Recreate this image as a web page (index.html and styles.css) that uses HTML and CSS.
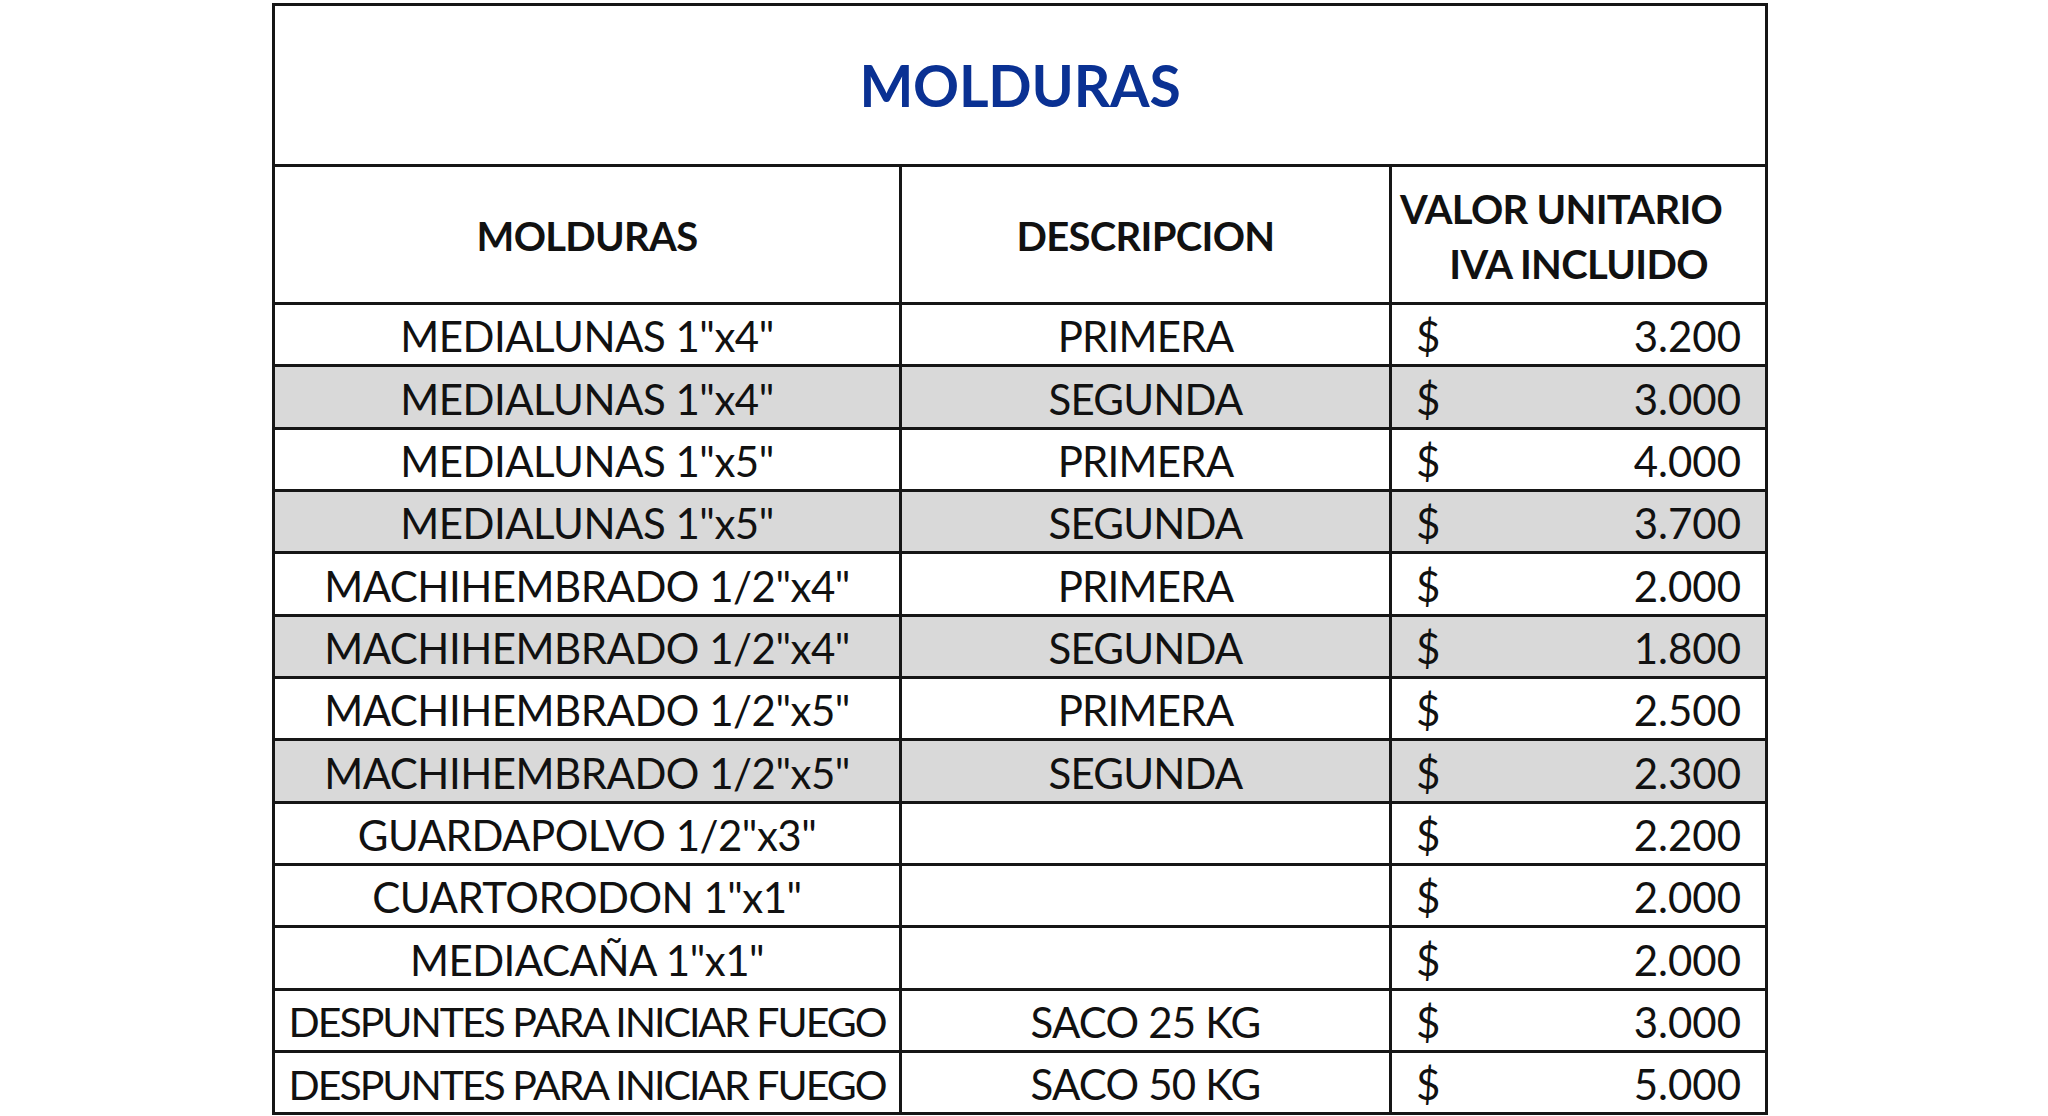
FILE: index.html
```html
<!DOCTYPE html>
<html lang="es">
<head>
<meta charset="utf-8">
<title>Molduras</title>
<link rel="stylesheet" href="styles.css">
</head>
<body>
<div class="sheet">
  <div class="cell title">MOLDURAS</div>
  <div class="cell head">MOLDURAS</div>
  <div class="cell head">DESCRIPCION</div>
  <div class="cell head head-two">
    <div class="line-one">VALOR UNITARIO</div>
    <div class="line-two">IVA INCLUIDO</div>
  </div>

  <div class="cell name">MEDIALUNAS 1"x4"</div>
  <div class="cell desc">PRIMERA</div>
  <div class="cell price"><span>$</span><span>3.200</span></div>

  <div class="cell name alt">MEDIALUNAS 1"x4"</div>
  <div class="cell desc alt">SEGUNDA</div>
  <div class="cell price alt"><span>$</span><span>3.000</span></div>

  <div class="cell name">MEDIALUNAS 1"x5"</div>
  <div class="cell desc">PRIMERA</div>
  <div class="cell price"><span>$</span><span>4.000</span></div>

  <div class="cell name alt">MEDIALUNAS 1"x5"</div>
  <div class="cell desc alt">SEGUNDA</div>
  <div class="cell price alt"><span>$</span><span>3.700</span></div>

  <div class="cell name">MACHIHEMBRADO 1/2"x4"</div>
  <div class="cell desc">PRIMERA</div>
  <div class="cell price"><span>$</span><span>2.000</span></div>

  <div class="cell name alt">MACHIHEMBRADO 1/2"x4"</div>
  <div class="cell desc alt">SEGUNDA</div>
  <div class="cell price alt"><span>$</span><span>1.800</span></div>

  <div class="cell name">MACHIHEMBRADO 1/2"x5"</div>
  <div class="cell desc">PRIMERA</div>
  <div class="cell price"><span>$</span><span>2.500</span></div>

  <div class="cell name alt">MACHIHEMBRADO 1/2"x5"</div>
  <div class="cell desc alt">SEGUNDA</div>
  <div class="cell price alt"><span>$</span><span>2.300</span></div>

  <div class="cell name">GUARDAPOLVO 1/2"x3"</div>
  <div class="cell desc"></div>
  <div class="cell price"><span>$</span><span>2.200</span></div>

  <div class="cell name">CUARTORODON 1"x1"</div>
  <div class="cell desc"></div>
  <div class="cell price"><span>$</span><span>2.000</span></div>

  <div class="cell name">MEDIACAÑA 1"x1"</div>
  <div class="cell desc"></div>
  <div class="cell price"><span>$</span><span>2.000</span></div>

  <div class="cell name tight">DESPUNTES PARA INICIAR FUEGO</div>
  <div class="cell desc">SACO 25 KG</div>
  <div class="cell price"><span>$</span><span>3.000</span></div>

  <div class="cell name tight">DESPUNTES PARA INICIAR FUEGO</div>
  <div class="cell desc">SACO 50 KG</div>
  <div class="cell price"><span>$</span><span>5.000</span></div>
</div>
</body>
</html>
```

FILE: styles.css
```css
html, body {
  margin: 0;
  padding: 0;
  background: #ffffff;
}

body {
  font-family: "Lato", "Liberation Sans", sans-serif;
  color: #111111;
  height: 1116px;
  overflow: hidden;
}

.sheet {
  box-sizing: border-box;
  width: 1496px;
  margin: 3px 0 0 272px;
  padding: 3px;
  background: #161616;
  display: grid;
  grid-template-columns: 624px 487px 373px;
  grid-template-rows: 158px 135px repeat(13, 59.35px);
  gap: 3px;
}

.cell {
  background: #ffffff;
  display: flex;
  align-items: center;
  justify-content: center;
  font-size: 42px;
  letter-spacing: -0.5px;
  line-height: 1;
  padding-top: 3px;
  box-sizing: border-box;
  white-space: nowrap;
}

.alt {
  background: #d9d9d9;
}

.title {
  grid-column: 1 / 4;
  color: #0a3193;
  font-weight: 700;
  font-size: 57px;
  letter-spacing: -0.2px;
  padding-top: 0;
}

.head {
  font-weight: 700;
  font-size: 40px;
  letter-spacing: -0.7px;
}

.head-two {
  flex-direction: column;
  align-items: stretch;
  line-height: 55px;
  padding-top: 4px;
}

.line-one {
  text-align: left;
  padding-left: 8px;
}

.line-two {
  text-align: center;
}

.name.tight {
  font-size: 41px;
  letter-spacing: -2px;
}

.desc {
  letter-spacing: -0.8px;
}

.price {
  justify-content: space-between;
  padding-left: 24px;
  padding-right: 24px;
  letter-spacing: 0;
}
```
